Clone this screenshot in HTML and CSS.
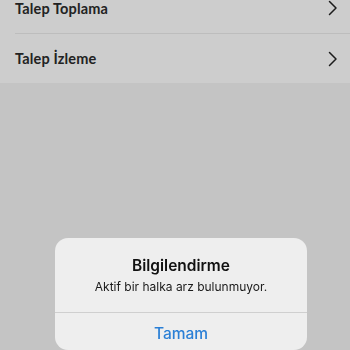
FILE: index.html
```html
<!DOCTYPE html>
<html lang="tr">
<head>
<meta charset="utf-8">
<link rel="stylesheet" href="styles.css">
</head>
<body>
<div class="list">
  <div class="row">
    <span class="label">Talep Toplama</span>
    <svg class="chev" width="10" height="16" viewBox="0 0 10 16"><path d="M1.5 1.5 L8 8 L1.5 14.5" fill="none" stroke="#1c1c1c" stroke-width="1.5" stroke-linecap="round" stroke-linejoin="round"/></svg>
  </div>
  <div class="row">
    <span class="label">Talep İzleme</span>
    <svg class="chev" width="10" height="16" viewBox="0 0 10 16"><path d="M1.5 1.5 L8 8 L1.5 14.5" fill="none" stroke="#1c1c1c" stroke-width="1.5" stroke-linecap="round" stroke-linejoin="round"/></svg>
  </div>
</div>
<div class="overlay">
  <div class="alert">
    <div class="alert-body">
      <div class="alert-title">Bilgilendirme</div>
      <div class="alert-msg">Aktif bir halka arz bulunmuyor.</div>
    </div>
    <div class="alert-btn">Tamam</div>
  </div>
</div>
</body>
</html>
```
FILE: styles.css
```css
html, body {
  margin: 0;
  padding: 0;
  background: #c4c4c4;
  height: 100%;
  overflow: hidden;
}
.list {
  background: #cdcdcd;
  margin-top: -17px;
  padding-left: 15px;
}
.row {
  height: 50px;
  display: flex;
  align-items: center;
  justify-content: space-between;
  padding-right: 12px;
  box-sizing: border-box;
}
.row + .row {
  border-top: 1px solid #bdbdbd;
}
.label {
  font-family: "Lato", "Liberation Sans", sans-serif;
  font-weight: 700;
  font-size: 14.5px;
  color: #222;
  letter-spacing: 0.15px;
}
.chev {
  display: block;
}
.overlay {
  position: fixed;
  inset: 0;
  display: flex;
  flex-direction: column;
  padding: 238px 0 0 55px;
}
.alert {
  width: 252px;
  background: #eeeeee;
  border-radius: 13px;
  font-family: "Inter", "Liberation Sans", sans-serif;
  text-align: center;
  overflow: hidden;
}
.alert-body {
  padding: 18px 16px 16px;
  border-bottom: 1px solid #cfcfcf;
}
.alert-title {
  font-size: 15.5px;
  font-weight: 600;
  line-height: 20px;
  color: #111;
}
.alert-msg {
  font-size: 12px;
  line-height: 18px;
  margin-top: 2px;
  color: #1a1a1a;
}
.alert-btn {
  height: 42px;
  line-height: 42px;
  font-size: 15.5px;
  font-weight: 500;
  color: #2a7fd6;
}
```
